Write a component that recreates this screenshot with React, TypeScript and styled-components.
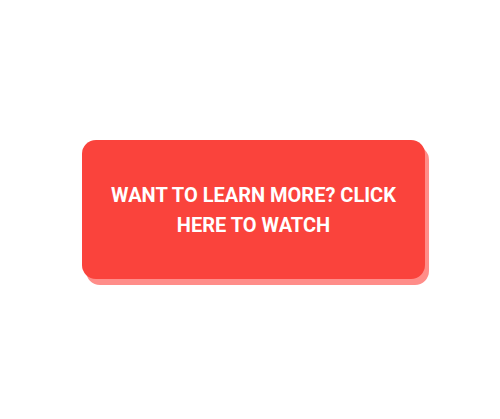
import React from "react";
import styled, { createGlobalStyle } from "styled-components";

const Global = createGlobalStyle`
  html, body { margin: 0; padding: 0; background: #ffffff; }
  body { font-family: Roboto, "Liberation Sans", sans-serif; }
`;

const Page = styled.div`
  width: 500px;
  height: 419px;
  display: flex;
  align-items: flex-start;
  justify-content: flex-start;
  padding: 140px 0 0 82px;
  box-sizing: border-box;
`;

const CtaButton = styled.a`
  width: 343px;
  height: 139px;
  box-sizing: border-box;
  padding: 0 24px;
  display: flex;
  align-items: center;
  justify-content: center;
  text-align: center;
  background: #fa433c;
  border-radius: 14px;
  box-shadow: 4px 6px 0 #ff8d89;
  color: #ffffff;
  font-family: Roboto, "Liberation Sans", sans-serif;
  font-weight: 700;
  font-size: 20px;
  line-height: 30px;
  text-transform: uppercase;
  text-decoration: none;
  cursor: pointer;
`;

export default function App() {
  return (
    <>
      <Global />
      <Page>
        <CtaButton>Want to learn more? Click here to watch</CtaButton>
      </Page>
    </>
  );
}
